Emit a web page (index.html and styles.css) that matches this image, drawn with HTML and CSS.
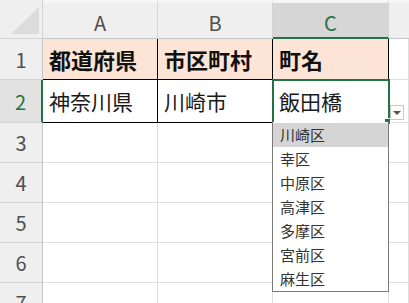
FILE: index.html
```html
<!DOCTYPE html>
<html lang="ja">
<head>
    <meta charset="UTF-8">
    <meta name="viewport" content="width=device-width, initial-scale=1.0">
    <title>入力規則リスト</title>
    <link rel="stylesheet" href="styles.css">
</head>
<body>
    <div class="sheet">
        <div class="corner"><span class="corner-mark"></span></div>
        <div class="col-head">A</div>
        <div class="col-head">B</div>
        <div class="col-head selected">C</div>
        <div class="col-head last"></div>

        <div class="row-head">1</div>
        <div class="cell table head-cell">都道府県</div>
        <div class="cell table head-cell">市区町村</div>
        <div class="cell table head-cell">町名</div>
        <div class="cell"></div>

        <div class="row-head selected">2</div>
        <div class="cell table">神奈川県</div>
        <div class="cell table">川崎市</div>
        <div class="cell table active">
            飯田橋
            <span class="fill-handle"></span>
            <span class="drop-btn"><span class="drop-arrow"></span></span>
            <ul class="drop-list">
                <li class="hover">川崎区</li>
                <li>幸区</li>
                <li>中原区</li>
                <li>高津区</li>
                <li>多摩区</li>
                <li>宮前区</li>
                <li>麻生区</li>
            </ul>
        </div>
        <div class="cell"></div>

        <div class="row-head">3</div>
        <div class="cell"></div><div class="cell"></div><div class="cell"></div><div class="cell"></div>
        <div class="row-head">4</div>
        <div class="cell"></div><div class="cell"></div><div class="cell"></div><div class="cell"></div>
        <div class="row-head">5</div>
        <div class="cell"></div><div class="cell"></div><div class="cell"></div><div class="cell"></div>
        <div class="row-head">6</div>
        <div class="cell"></div><div class="cell"></div><div class="cell"></div><div class="cell"></div>
        <div class="row-head">7</div>
        <div class="cell"></div><div class="cell"></div><div class="cell"></div><div class="cell"></div>
    </div>
</body>
</html>
```

FILE: styles.css
```css
body {
    margin: 0;
    padding: 0;
    background-color: #ffffff;
    font-family: "Noto Sans CJK JP", "Noto Sans", sans-serif;
    overflow: hidden;
}

.sheet {
    display: grid;
    grid-template-columns: 43px 115px 115px 116px 1fr;
    grid-template-rows: 39px 41px 43px repeat(5, 40px);
    width: 409px;
}

.corner,
.col-head,
.row-head {
    box-sizing: border-box;
    background-color: #efefef;
    color: #505050;
    font-size: 20px;
    display: flex;
    align-items: center;
    justify-content: center;
}

.corner {
    border-right: 1px solid #d4d4d4;
    border-bottom: 1px solid #d4d4d4;
    align-items: flex-end;
    justify-content: flex-end;
    padding: 0 3px 4px 0;
}

.corner-mark {
    width: 28px;
    height: 27px;
    background-color: #dcdcdc;
    clip-path: polygon(100% 0, 100% 100%, 0 100%);
}

.col-head {
    border-top: 3px solid #f6f6f6;
    border-right: 1px solid #d4d4d4;
    border-bottom: 1px solid #c6c6c6;
    padding-top: 4px;
}

.col-head.last {
    border-right: none;
}

.col-head.selected {
    background-color: #d6d6d6;
    color: #217346;
    border-bottom: 2px solid #217346;
    padding-top: 5px;
}

.row-head {
    border-right: 1px solid #c6c6c6;
    border-bottom: 1px solid #d4d4d4;
}

.row-head.selected {
    background-color: #e2e2e2;
    color: #217346;
    border-right: 2px solid #217346;
}

.cell {
    box-sizing: border-box;
    border-right: 1px solid #dedede;
    border-bottom: 1px solid #dedede;
    display: flex;
    align-items: center;
    padding-left: 6px;
    font-size: 21px;
    color: #1a1a1a;
    white-space: nowrap;
}

.cell.table {
    border-right: 1px solid #000000;
    border-bottom: 1px solid #000000;
}

.head-cell {
    background-color: #fce4d6;
    font-weight: bold;
    font-size: 22px;
    color: #111111;
}

.active {
    position: relative;
    outline: 2px solid #217346;
    outline-offset: -1px;
}

.fill-handle {
    position: absolute;
    right: -3px;
    bottom: -3px;
    width: 5px;
    height: 5px;
    background-color: #217346;
    border: 1px solid #ffffff;
}

.drop-btn {
    position: absolute;
    left: 100%;
    top: 25px;
    margin-left: 2px;
    width: 14px;
    height: 15px;
    box-sizing: border-box;
    border: 1px solid #c8c8c8;
    background-color: #ffffff;
    display: flex;
    align-items: center;
    justify-content: center;
}

.drop-arrow {
    width: 0;
    height: 0;
    border-left: 4px solid transparent;
    border-right: 4px solid transparent;
    border-top: 4px solid #555555;
}

.drop-list {
    position: absolute;
    left: -1px;
    top: 100%;
    z-index: 2;
    width: 117px;
    margin: 0;
    padding: 1px 0 0 0;
    list-style: none;
    box-sizing: border-box;
    background-color: #ffffff;
    border: 1px solid #7a7a7a;
    border-top: none;
}

.drop-list li {
    height: 24px;
    line-height: 24px;
    padding-left: 7px;
    font-size: 15px;
    color: #333333;
}

.drop-list li.hover {
    background-color: #d5d5d5;
}
```
